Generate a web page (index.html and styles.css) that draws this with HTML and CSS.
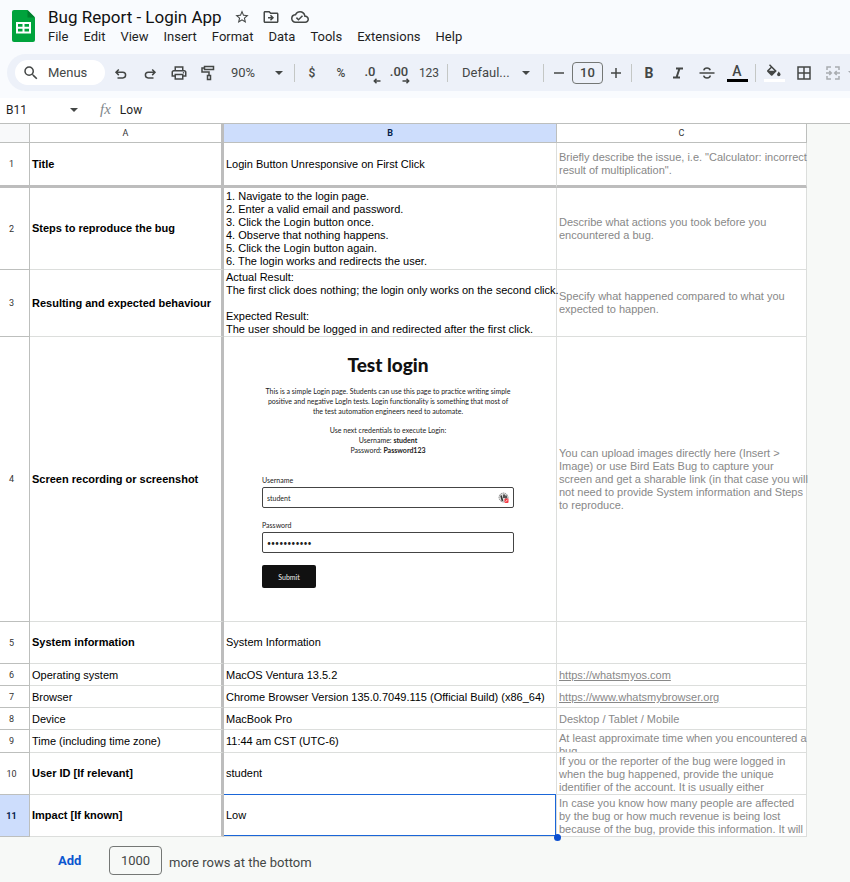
FILE: index.html
```html
<!DOCTYPE html>
<html lang="en">
<head>
<meta charset="utf-8">
<title>Bug Report - Login App</title>
<link rel="stylesheet" href="styles.css">
</head>
<body>
<header class="top">
  <div class="titlebar">
    <svg class="logo" viewBox="0 0 23 32" aria-hidden="true"><path fill="#00a33c" d="M2 0h13.500l7.500 7.500V30a2 2 0 0 1-2 2H2a2 2 0 0 1-2-2V2a2 2 0 0 1 2-2z"/><path fill="#007f2d" d="M15.500 0l7.500 7.500h-7.500z"/><path fill="#fff" fill-rule="evenodd" d="M4 12h15v11.500H4zM6 14v2.700h4.500V14zm6.500 0v2.700H17V14zM6 18.700v2.800h4.500v-2.800zm6.500 0v2.800H17v-2.800z"/></svg>
    <div class="heading">
      <div class="name-row">
        <h1>Bug Report - Login App</h1>
        <button class="mini" aria-label="Star"><svg width="16" height="16" viewBox="0 0 24 24"><path d="M22 9.240l-7.190-.62L12 2 9.190 8.630 2 9.240l5.460 4.730L5.820 21 12 17.270 18.180 21l-1.630-7.030L22 9.240zM12 15.400l-3.760 2.270 1-4.280-3.320-2.880 4.380-.38L12 6.100l1.710 4.040 4.380.38-3.320 2.880 1 4.280L12 15.400z"/></svg></button>
        <button class="mini" aria-label="Move"><svg width="18" height="18" viewBox="0 0 24 24"><path d="M20 6h-8l-2-2H4c-1.100 0-2 .9-2 2v12c0 1.100.9 2 2 2h16c1.100 0 2-.9 2-2V8c0-1.100-.9-2-2-2zm0 12H4V6h5.170l2 2H20v10zm-7.990-1l4-4-4-4-1.410 1.410L12.160 12H8v2h4.160l-1.560 1.590z"/></svg></button>
        <button class="mini" aria-label="Document status"><svg width="18" height="18" viewBox="0 0 24 24"><path d="M19.350 10.040A7.490 7.490 0 0 0 12 4C9.110 4 6.600 5.640 5.350 8.040A5.994 5.994 0 0 0 0 14c0 3.310 2.690 6 6 6h13c2.760 0 5-2.240 5-5 0-2.640-2.050-4.780-4.650-4.960zM19 18H6c-2.210 0-4-1.790-4-4 0-2.050 1.530-3.760 3.560-3.970l1.070-.11.5-.95A5.469 5.469 0 0 1 12 6c2.620 0 4.880 1.860 5.390 4.430l.3 1.500 1.530.11A2.980 2.980 0 0 1 22 15c0 1.650-1.350 3-3 3zm-9-3.820l-2.090-2.090L6.500 13.500 10 17l6.010-6.010-1.410-1.410z"/></svg></button>
      </div>
      <nav class="menus">
        <button>File</button><button>Edit</button><button>View</button><button>Insert</button><button>Format</button><button>Data</button><button>Tools</button><button>Extensions</button><button>Help</button>
      </nav>
    </div>
  </div>
  <div class="toolbar">
    <button class="search"><svg width="18" height="18" viewBox="0 0 24 24"><path d="M15.500 14h-.79l-.28-.27A6.471 6.471 0 0 0 16 9.500 6.500 6.500 0 1 0 9.500 16c1.610 0 3.090-.59 4.230-1.570l.27.28v.79l5 4.990L20.490 19l-4.990-5zm-6 0C7.010 14 5 11.990 5 9.500S7.010 5 9.500 5 14 7.010 14 9.500 11.990 14 9.500 14z"/></svg>Menus</button>
    <button class="tool" aria-label="Undo"><svg width="16" height="16" viewBox="0 0 16 16"><path class="line" d="M5.800 4.500 3 7.300l2.800 2.800M3.200 7.300h6.600a2.800 2.800 0 0 1 0 5.600H4.500"/></svg></button>
    <button class="tool" aria-label="Redo"><svg width="16" height="16" viewBox="0 0 16 16"><path class="line" d="M10.200 4.500 13 7.300l-2.800 2.800M12.800 7.300H6.200a2.800 2.800 0 0 0 0 5.600h5.300"/></svg></button>
    <button class="tool" aria-label="Print"><svg width="18" height="18" viewBox="0 0 24 24"><path d="M19 8h-1V3H6v5H5c-1.660 0-3 1.340-3 3v6h4v4h12v-4h4v-6c0-1.660-1.340-3-3-3zM8 5h8v3H8V5zm8 12v2H8v-4h8v2zm2-2v-2H6v2H4v-4c0-.55.45-1 1-1h14c.55 0 1 .45 1 1v4h-2z"/><circle cx="18" cy="11.500" r="1"/></svg></button>
    <button class="tool" aria-label="Paint format"><svg width="16" height="18" viewBox="0 0 16 18"><path class="line" d="M4.500 2.500h9v3h-9zM4.500 4H2v4h7v3M7.500 11.500h3v4h-3z"/></svg></button>
    <label class="drop zoom"><select aria-label="Zoom"><option>90%</option></select><i class="caret"></i></label>
    <span class="sep"></span>
    <button class="tool">$</button>
    <button class="tool">%</button>
    <button class="tool dec" aria-label="Decrease decimal places">.0<svg width="8" height="6" viewBox="0 0 8 6"><path class="line" d="M7.500 3H1.500M3.500.800 1.300 3l2.200 2.200"/></svg></button>
    <button class="tool dec" aria-label="Increase decimal places">.00<svg width="8" height="6" viewBox="0 0 8 6"><path class="line" d="M.5 3h6M4.500.800 6.700 3 4.500 5.200"/></svg></button>
    <button class="tool num">123</button>
    <span class="sep"></span>
    <label class="drop font"><select aria-label="Font"><option>Defaul...</option></select><i class="caret"></i></label>
    <span class="sep"></span>
    <button class="tool step" aria-label="Decrease font size"><svg width="12" height="12" viewBox="0 0 12 12"><path class="line" d="M1 6h10"/></svg></button>
    <input class="size" aria-label="Font size" value="10">
    <button class="tool step" aria-label="Increase font size"><svg width="12" height="12" viewBox="0 0 12 12"><path class="line" d="M1 6h10M6 1v10"/></svg></button>
    <span class="sep"></span>
    <button class="tool bold">B</button>
    <button class="tool" aria-label="Italic"><svg width="12" height="12" viewBox="0 0 12 12"><path class="line heavy" d="M4 1.500h7M1 10.500h7M7.500 1.500l-3 9"/></svg></button>
    <button class="tool" aria-label="Strikethrough"><svg width="16" height="14" viewBox="0 0 16 14"><path class="line" d="M.5 7h15M11.200 4.300C10.800 2.700 9.500 2 8 2 6.200 2 5 2.900 4.800 4.300M4.700 9.700C5 11.300 6.400 12 8 12c1.900 0 3.200-.9 3.200-2.400"/></svg></button>
    <button class="tool wide color">A</button>
    <span class="sep"></span>
    <button class="tool wide fill" aria-label="Fill color"><svg width="16" height="14" viewBox="0 0 16 14"><path d="M4 .2 3 1.200l1.700 1.700L1.300 6.300a1 1 0 0 0 0 1.400l3.700 3.700a1 1 0 0 0 1.400 0l4.400-4.400zM5.700 4l2.700 2.700H3z" fill-rule="evenodd"/><path d="M12.800 7.500s-1.700 2-1.700 3a1.700 1.700 0 0 0 3.400 0c0-1-1.700-3-1.700-3z"/></svg></button>
    <button class="tool" aria-label="Borders"><svg width="14" height="14" viewBox="0 0 14 14"><path class="line" d="M1 1h12v12H1zM7 1v12M1 7h12"/></svg></button>
    <button class="tool faint" aria-label="Merge cells"><svg width="14" height="14" viewBox="0 0 14 14"><path class="line" d="M5 1H1v3M9 1h4v3M5 13H1v-3M9 13h4v-3M0 7h5M3.300 5 5.300 7l-2 2M14 7H9M10.700 5l-2 2 2 2"/></svg></button>
    <button class="tool faint more-tool" aria-label="Merge type"><i class="caret"></i></button>
  </div>
</header>
<div class="formula">
  <input class="cellname" aria-label="Cell name" value="B11">
  <i class="caret"></i>
  <span class="fx">fx</span>
  <input class="value" aria-label="Formula" value="Low">
</div>
<main>
  <table>
    <colgroup><col class="c-num"><col class="c-a"><col class="c-b"><col class="c-c"></colgroup>
    <thead><tr><th class="corner"></th><th class="pin">A</th><th class="active">B</th><th>C</th></tr></thead>
    <tbody>
      <tr class="frozen"><th>1</th><td class="pin strong">Title</td><td>Login Button Unresponsive on First Click</td><td class="hint">Briefly describe the issue, i.e. "Calculator: incorrect<br>result of multiplication".</td></tr>
      <tr class="steps"><th>2</th><td class="pin strong">Steps to reproduce the bug</td><td>1. Navigate to the login page.<br>2. Enter a valid email and password.<br>3. Click the Login button once.<br>4. Observe that nothing happens.<br>5. Click the Login button again.<br>6. The login works and redirects the user.</td><td class="hint">Describe what actions you took before you<br>encountered a bug.</td></tr>
      <tr class="result"><th>3</th><td class="pin strong">Resulting and expected behaviour</td><td>Actual Result:<br>The first click does nothing; the login only works on the second click.<br><br>Expected Result:<br>The user should be logged in and redirected after the first click.</td><td class="hint">Specify what happened compared to what you<br>expected to happen.</td></tr>
      <tr class="shot"><th>4</th><td class="pin strong">Screen recording or screenshot</td><td>
        <form class="login">
          <h2>Test login</h2>
          <p>This is a simple Login page. Students can use this page to practice writing simple<br>positive and negative LogIn tests. Login functionality is something that most of<br>the test automation engineers need to automate.</p>
          <p>Use next credentials to execute Login:<br>Username: <b>student</b><br>Password: <b>Password123</b></p>
          <div class="field">
            <label for="user">Username</label>
            <div class="box"><input id="user" value="student"><svg width="12" height="12" viewBox="0 0 12 12"><circle cx="5.500" cy="5.500" r="4.500" fill="#ddd" stroke="#777" stroke-width=".8" stroke-dasharray="1.500 .7"/><path d="M3 3.500 4.500 9M6 2.500v3.500" stroke="#333" stroke-width="1.600"/><path d="M7 3.500h2v3H7z" fill="#555"/><rect x="6.500" y="6.500" width="4" height="4.500" rx="1" fill="#f33b45"/><path d="M7.500 9.500 9.500 8" stroke="#fff" stroke-width=".8"/></svg></div>
          </div>
          <div class="field">
            <label for="pass">Password</label>
            <div class="box"><input id="pass" class="secret" value="•••••••••••"></div>
          </div>
          <button type="button" class="submit">Submit</button>
        </form>
      </td><td class="hint">You can upload images directly here (Insert &gt;<br>Image) or use Bird Eats Bug to capture your<br>screen and get a sharable link (in that case you will<br>not need to provide System information and Steps<br>to reproduce.</td></tr>
      <tr class="medium"><th>5</th><td class="pin strong">System information</td><td>System Information</td><td></td></tr>
      <tr class="small"><th>6</th><td class="pin">Operating system</td><td>MacOS Ventura 13.5.2</td><td class="hint"><a href="https://whatsmyos.com">https://whatsmyos.com</a></td></tr>
      <tr class="small"><th>7</th><td class="pin">Browser</td><td>Chrome Browser Version 135.0.7049.115 (Official Build) (x86_64)</td><td class="hint"><a href="https://www.whatsmybrowser.org">https://www.whatsmybrowser.org</a></td></tr>
      <tr class="small"><th>8</th><td class="pin">Device</td><td>MacBook Pro</td><td class="hint">Desktop / Tablet / Mobile</td></tr>
      <tr class="time"><th>9</th><td class="pin">Time (including time zone)</td><td>11:44 am CST (UTC-6)</td><td class="hint cut"><div>At least approximate time when you encountered a<br>bug.</div></td></tr>
      <tr class="medium"><th>10</th><td class="pin strong">User ID [If relevant]</td><td>student</td><td class="hint cut"><div>If you or the reporter of the bug were logged in<br>when the bug happened, provide the unique<br>identifier of the account. It is usually either</div></td></tr>
      <tr class="medium"><th class="active">11</th><td class="pin strong">Impact [If known]</td><td class="selected">Low</td><td class="hint cut"><div>In case you know how many people are affected<br>by the bug or how much revenue is being lost<br>because of the bug, provide this information. It will</div></td></tr>
    </tbody>
  </table>
  <div class="more">
    <button class="add">Add</button>
    <input id="rows" value="1000">
    <label for="rows">more rows at the bottom</label>
  </div>
</main>
</body>
</html>
```
FILE: styles.css
```css
* { box-sizing: border-box; }
body { margin: 0; min-height: 100vh; display: flex; flex-direction: column; background: #f7f9f7; color: #1f1f1f; font-family: Roboto, "Liberation Sans", sans-serif; overflow-x: hidden; }
button, input, select { font: inherit; color: inherit; border: 0; background: none; padding: 0; margin: 0; outline: none; }
svg { display: block; flex: none; fill: #444746; }
.line { fill: none; stroke: #444746; stroke-width: 1.5; }
.heavy { stroke-width: 2; }
.caret { flex: none; width: 0; height: 0; border: 4px solid transparent; border-top-color: #444746; border-bottom: 0; }

.top { background: #f9fbfe; padding-bottom: 7px; }
.titlebar { display: flex; gap: 12px; padding: 6px 0 0 12px; height: 54px; }
.logo { width: 23px; height: 32px; margin-top: 4px; }
.name-row { display: flex; align-items: center; height: 22px; padding-left: 1px; }
h1 { margin: 0 11px 0 0; font-size: 17px; line-height: 22px; font-weight: 400; white-space: nowrap; color: #111; }
.mini { width: 18px; height: 18px; margin-right: 11px; display: grid; place-items: center; }
.menus { display: flex; gap: 15px; padding-left: 1px; font-size: 13px; line-height: 18px; }

.toolbar { display: flex; align-items: center; gap: 1px; height: 37px; margin-left: 7px; padding-left: 8px; background: #edf1f9; border-radius: 19px 0 0 19px; overflow: hidden; color: #444746; font-size: 13px; }
.search { display: flex; align-items: center; gap: 8px; flex: none; width: 90px; height: 25px; margin-right: 1px; padding-left: 7px; border-radius: 13px; background: #fff; }
.tool { flex: none; width: 28px; height: 28px; display: flex; align-items: center; justify-content: center; font-size: 12px; font-weight: 500; position: relative; }
.dec { font-size: 13px; padding-bottom: 2px; }
.dec svg { position: absolute; right: 3px; bottom: 3px; }
.num { width: 30px; font-weight: 400; }
.step { width: 24px; }
.bold { font-size: 14px; font-weight: 700; }
.wide { width: 30px; }
.color, .fill { flex-direction: column; font-size: 14px; line-height: 16px; }
.color::after, .fill::after { content: ""; width: 21px; height: 3px; background: #000; }
.fill::after { background: #fff; margin-top: 1px; }
.faint { opacity: .4; }
.more-tool { justify-content: flex-start; }
.sep { flex: none; width: 1px; height: 18px; margin: 0 2px; background: #c4c7c5; }
.drop { display: flex; align-items: center; flex: none; }
.drop select { appearance: none; flex: 1; min-width: 0; }
.zoom { width: 68px; padding: 0 8px; }
.font { width: 89px; padding: 0 10px 0 11px; }
.size { flex: none; width: 31px; height: 22px; border: 1px solid #747775; border-radius: 4px; text-align: center; font-weight: 500; }

.formula { display: flex; align-items: center; height: 26px; padding: 0 6px 2px; background: #fff; border-bottom: 1px solid #bdbfbd; font-size: 12px; }
.cellname { width: 64px; }
.fx { margin: 0 9px 0 22px; font: italic 15px "Liberation Serif", serif; color: #80868b; }
.value { flex: 1; }

main { flex: 1; }
table { table-layout: fixed; width: 807px; border-spacing: 0; background: #fff; font: 11px/13px "Liberation Sans", Arial, sans-serif; color: #000; }
.c-num { width: 30px; }
.c-a { width: 194px; }
.c-b { width: 333px; }
.c-c { width: 250px; }
th, td { padding: 0 2px; border: solid #dcdedc; border-width: 0 1px 1px 0; text-align: left; vertical-align: middle; white-space: nowrap; }
th { border-color: #bdbfbd; font: 400 9px/12px Roboto, sans-serif; text-align: center; color: #333; }
tbody th { padding-right: 8px; }
thead th { height: 19px; }
.corner { background: #f8f9fa; }
th.active { background: #cdddfc; font-weight: 700; color: #041e49; }
.pin { border-right: 3px solid #bdbdbd; }
.strong { font-weight: 700; }
.hint, .hint a { color: #888; }
.frozen > * { height: 45px; border-bottom: 3px solid #bdbdbd; }
.steps > * { height: 82px; }
.result > * { height: 67px; }
.shot > * { height: 285px; }
.medium > * { height: 42px; }
.small > * { height: 22px; }
.small > td { padding-top: 2px; }
.time > * { height: 23px; }
.cut { vertical-align: top; padding-top: 2px; }
.cut div { max-height: 39px; overflow-x: visible; overflow-y: clip; }
.time .cut div { max-height: 20px; }
.selected { position: relative; }
.selected::before { content: ""; position: absolute; inset: -1px 0 0 0; border: solid #1a66d8; border-width: 1px 1px 1px 0; }
.selected::after { content: ""; position: absolute; right: -5px; bottom: -5px; width: 7px; height: 7px; border-radius: 50%; background: #0b4fd0; }

.login { height: 284px; margin: 0 40px 0 36px; padding-top: 16px; font: 7px/10px Lato, sans-serif; color: #222; }
.login h2 { margin: 0; font-size: 19px; line-height: 24px; font-weight: 900; text-align: center; color: #111; }
.login p { margin: 9px 0 0; text-align: center; }
.login p + p { margin-bottom: 20px; }
.field { margin-bottom: 12px; }
.field label { display: block; margin-bottom: 2px; }
.box { display: flex; align-items: center; height: 21px; padding: 0 3px 0 4px; border: 1px solid #444; border-radius: 2px; }
.box input { flex: 1; min-width: 0; }
.submit { width: 54px; height: 23px; border-radius: 2px; background: #111; color: #eee; }

.more { display: flex; align-items: center; height: 45px; padding: 2px 0 0 58px; font-size: 13px; color: #444746; }
.add { width: 51px; text-align: left; font-weight: 700; color: #0b57d0; }
.more input { width: 53px; height: 29px; border: 1px solid #747775; border-radius: 4px; text-align: center; }
.more label { margin-left: 7px; padding-top: 3px; }
```
